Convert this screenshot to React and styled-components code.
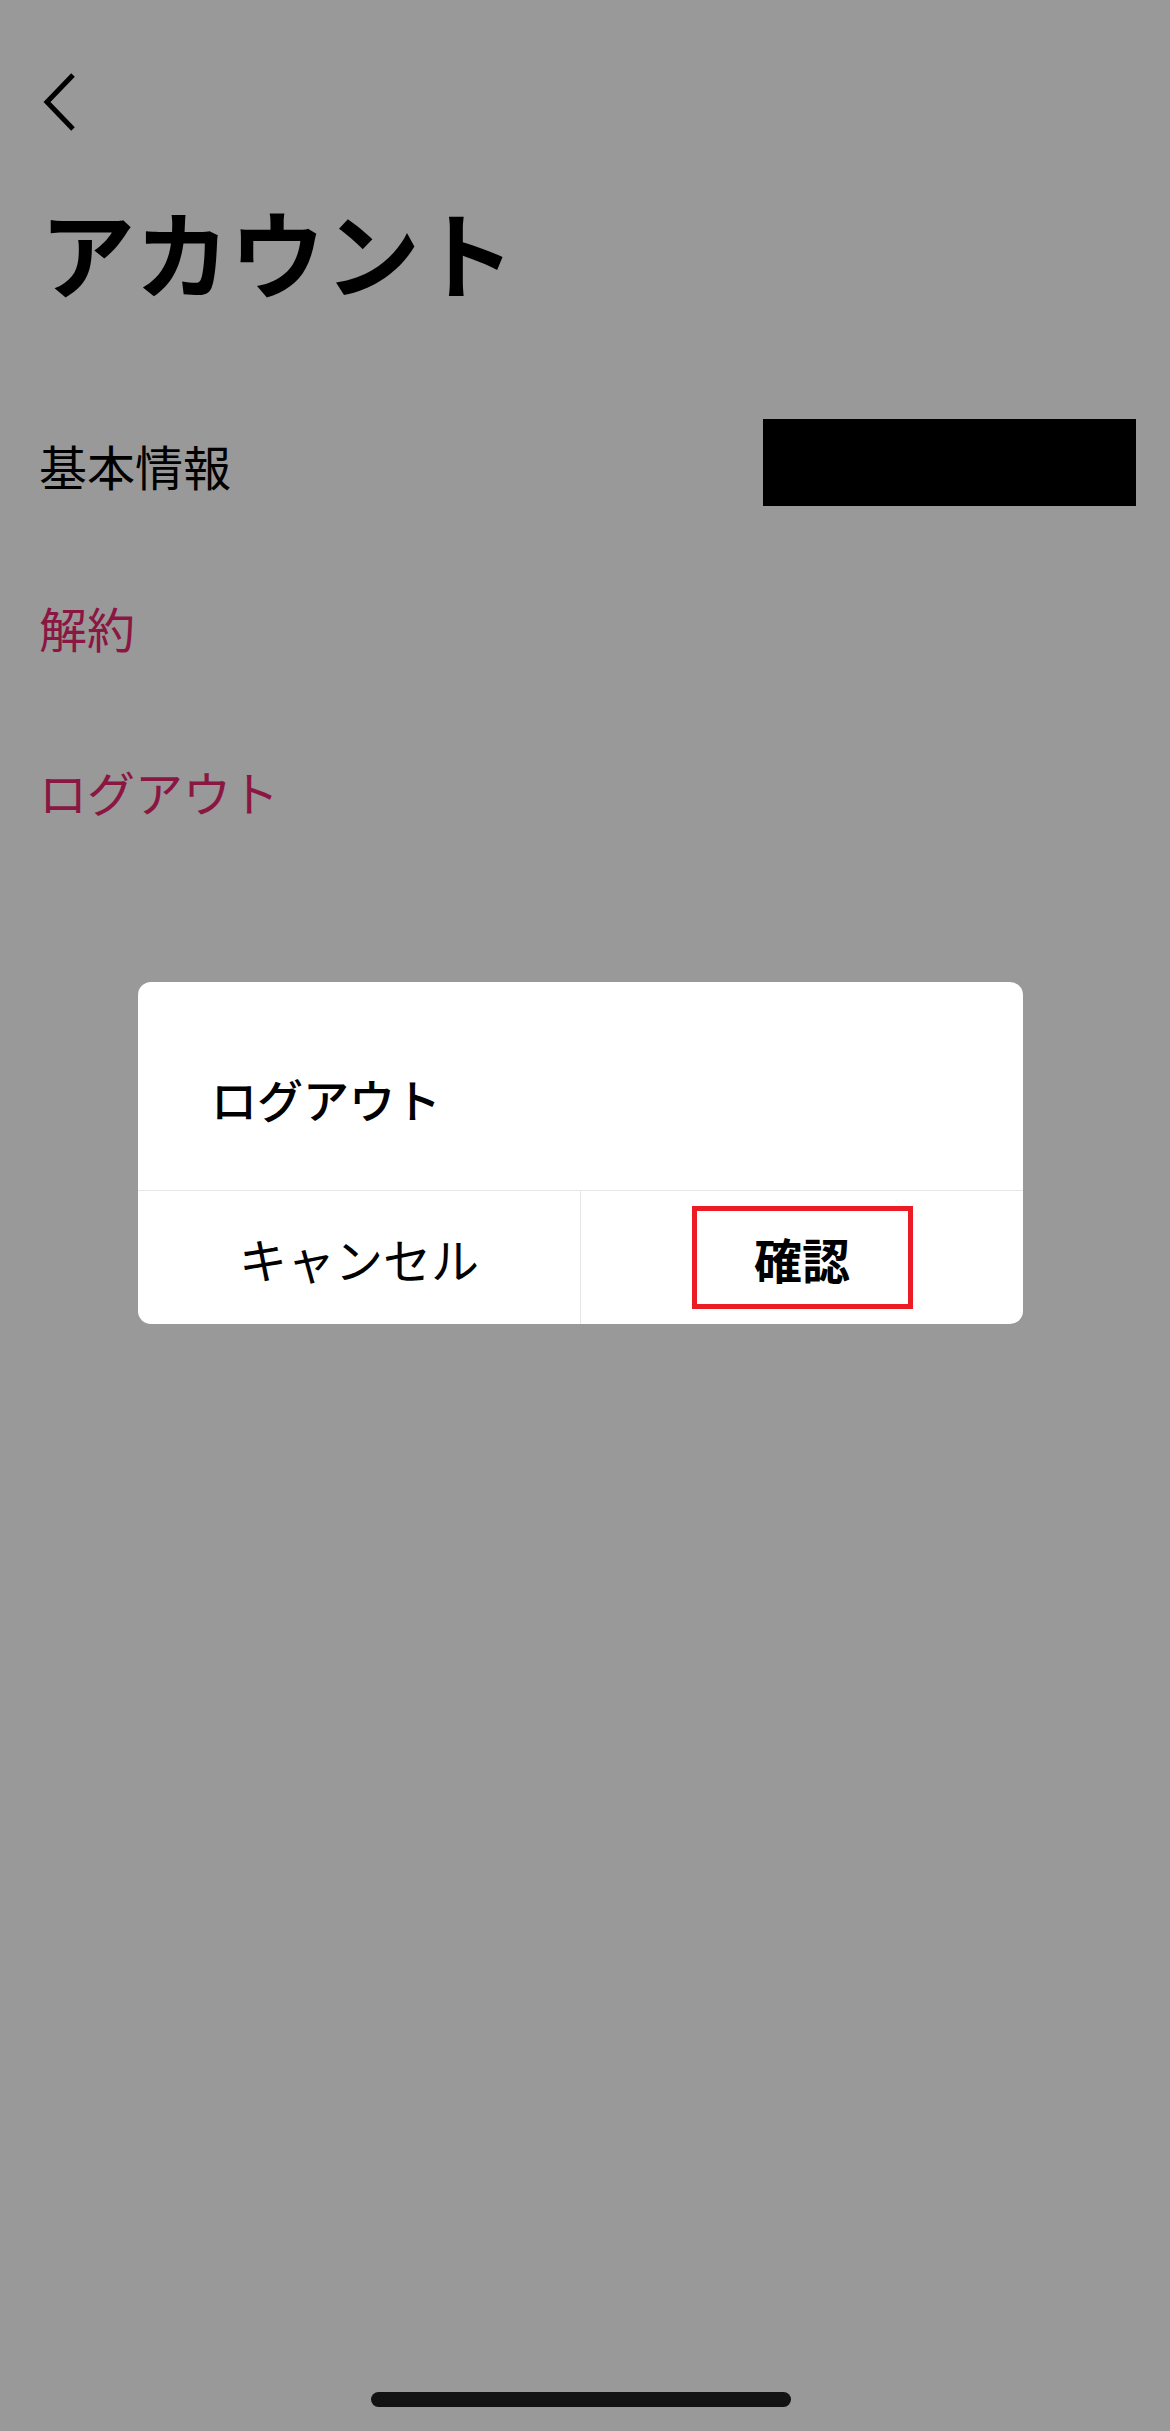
import React from 'react';
import styled, { createGlobalStyle } from 'styled-components';

const GlobalStyle = createGlobalStyle`
  html, body {
    margin: 0;
    padding: 0;
    background: #999999;
  }
  * {
    box-sizing: border-box;
  }
  body {
    font-family: 'Noto Sans CJK JP', 'Noto Sans', sans-serif;
  }
`;

const Page = styled.div`
  position: relative;
  min-height: 2431px;
  background: #999999;
  display: flex;
  flex-direction: column;
`;

const Header = styled.div`
  padding: 70px 0 0 42px;
  height: 134px;
`;

const BackButton = styled.button`
  display: block;
  padding: 0;
  border: 0;
  background: none;
  width: 36px;
  height: 64px;
`;

const Title = styled.h1`
  margin: 0;
  padding: 69px 0 0 40px;
  font-size: 95px;
  line-height: 1;
  font-weight: 700;
  color: #000;
  height: 251px;
`;

const List = styled.div`
  display: flex;
  flex-direction: column;
`;

const Row = styled.div`
  display: flex;
  align-items: center;
  justify-content: space-between;
  height: ${(props) => props.h}px;
  padding: 0 34px 0 39px;
`;

const RowLabel = styled.span`
  font-size: 48px;
  line-height: 1;
  color: ${(props) => (props.danger ? '#8a1642' : '#000')};
`;

const Masked = styled.div`
  width: 373px;
  height: 87px;
  background: #000;
  margin-top: -5px;
`;

const Overlay = styled.div`
  position: absolute;
  inset: 0;
  display: flex;
  align-items: flex-start;
  padding: 982px 0 0 138px;
`;

const Dialog = styled.div`
  width: 885px;
  background: #fff;
  border-radius: 13px;
  overflow: hidden;
`;

const DialogTitle = styled.div`
  height: 209px;
  padding: 93px 0 0 73px;
  font-size: 46px;
  line-height: 1;
  font-weight: 500;
  color: #000;
  border-bottom: 1px solid #e6e6e6;
`;

const Actions = styled.div`
  display: flex;
  height: 133px;
`;

const Action = styled.div`
  flex: 1;
  display: flex;
  align-items: center;
  justify-content: center;
  font-size: 48px;
  line-height: 1;
  color: #000;
  font-weight: ${(props) => (props.strong ? 700 : 400)};
  & + & {
    border-left: 1px solid #e6e6e6;
  }
`;

const Highlight = styled.span`
  display: inline-flex;
  align-items: center;
  justify-content: center;
  width: 221px;
  height: 103px;
  border: 5px solid #ec1c24;
`;

const HomeIndicator = styled.div`
  margin: auto 0 24px 371px;
  width: 420px;
  height: 15px;
  border-radius: 8px;
  background: #131313;
`;

const App = () => {
  return (
    <Page>
      <GlobalStyle />
      <Header>
        <BackButton aria-label="戻る">
          <svg width="36" height="64" viewBox="0 0 36 64">
            <polyline
              points="31,5 5,32 31,59"
              fill="none"
              stroke="#000"
              strokeWidth="5"
            />
          </svg>
        </BackButton>
      </Header>
      <Title>アカウント</Title>
      <List>
        <Row h={160}>
          <RowLabel>基本情報</RowLabel>
          <Masked />
        </Row>
        <Row h={163}>
          <RowLabel danger>解約</RowLabel>
        </Row>
        <Row h={166}>
          <RowLabel danger>ログアウト</RowLabel>
        </Row>
      </List>
      <HomeIndicator />
      <Overlay>
        <Dialog>
          <DialogTitle>ログアウト</DialogTitle>
          <Actions>
            <Action>キャンセル</Action>
            <Action strong>
              <Highlight>確認</Highlight>
            </Action>
          </Actions>
        </Dialog>
      </Overlay>
    </Page>
  );
};

export default App;
